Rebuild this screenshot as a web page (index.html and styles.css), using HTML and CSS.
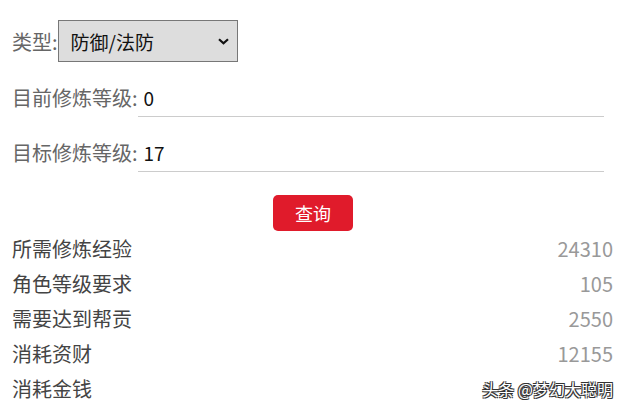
FILE: index.html
```html
<!DOCTYPE html>
<html lang="zh-CN">
<head>
<meta charset="utf-8">
<title>修炼查询</title>
<link rel="stylesheet" href="styles.css">
</head>
<body>
<div class="page">
  <div class="type-row">
    <span class="label">类型:</span>
    <div class="select-wrap">
      <select class="select">
        <option>防御/法防</option>
        <option>攻击</option>
      </select>
      <svg class="chevron" width="11" height="7" viewBox="0 0 11 7"><path d="M1 1.2 L5.5 5.3 L10 1.2" fill="none" stroke="#111" stroke-width="2.2"/></svg>
    </div>
  </div>
  <div class="field">
    <span class="label">目前修炼等级:</span>
    <input class="input" type="text" value="0">
  </div>
  <div class="field">
    <span class="label">目标修炼等级:</span>
    <input class="input" type="text" value="17">
  </div>
  <div class="actions">
    <button class="btn">查询</button>
  </div>
  <div class="results">
    <div class="row"><span>所需修炼经验</span><span class="val">24310</span></div>
    <div class="row"><span>角色等级要求</span><span class="val">105</span></div>
    <div class="row"><span>需要达到帮贡</span><span class="val">2550</span></div>
    <div class="row"><span>消耗资财</span><span class="val">12155</span></div>
    <div class="row"><span>消耗金钱</span><span class="val"></span></div>
  </div>
</div>
<div class="watermark">头条 @梦幻大聪明</div>
</body>
</html>
```
FILE: styles.css
```css
html, body {
  margin: 0;
  padding: 0;
  background: #fff;
}
body {
  font-family: "Noto Sans CJK SC", "Noto Sans", sans-serif;
  color: #444;
  position: relative;
  width: 627px;
  height: 407px;
  overflow: hidden;
}
.page {
  padding: 20px 14px 0 12px;
}
.label {
  font-size: 20px;
  color: #666;
  white-space: nowrap;
}
.type-row {
  display: flex;
  align-items: center;
  height: 42px;
}
.select-wrap {
  position: relative;
  width: 180px;
  height: 42px;
}
.select {
  appearance: none;
  -webkit-appearance: none;
  width: 180px;
  height: 42px;
  box-sizing: border-box;
  border: 1px solid #777;
  border-radius: 0;
  background: #dddddd;
  font-family: "Noto Sans CJK SC", "Noto Sans", sans-serif;
  font-size: 19px;
  color: #111;
  padding: 0 0 0 12px;
  margin: 0;
}
.chevron {
  position: absolute;
  right: 9px;
  top: 18px;
  pointer-events: none;
}
.field {
  display: flex;
  align-items: flex-end;
  height: 35px;
  margin-top: 20px;
}
.field .label {
  line-height: 32px;
  padding-bottom: 3px;
}
.input {
  flex: none;
  width: 466px;
  height: 35px;
  box-sizing: border-box;
  border: none;
  border-bottom: 1px solid #cccccc;
  outline: none;
  font-family: "Noto Sans CJK SC", "Noto Sans", sans-serif;
  font-size: 19px;
  color: #111;
  padding: 0 0 3px 6px;
  margin: 0;
  background: transparent;
}
.actions {
  display: flex;
  justify-content: center;
  margin-top: 23px;
}
.btn {
  width: 80px;
  height: 36px;
  border: none;
  border-radius: 5px;
  background: #e01b2b;
  color: #fff;
  font-family: "Noto Sans CJK SC", "Noto Sans", sans-serif;
  font-size: 18px;
  padding: 0;
  margin-left: 1px;
}
.results {
  font-size: 20px;
}
.row {
  display: flex;
  justify-content: space-between;
  height: 35px;
  line-height: 35px;
  color: #444;
}
.val {
  color: #999;
}
.watermark {
  position: absolute;
  right: 14px;
  top: 377px;
  font-size: 16px;
  line-height: 24px;
  color: #fff;
  text-shadow: 1px 1px 0 #333, -1px -1px 0 #333, 1px -1px 0 #333, -1px 1px 0 #333;
}
```
